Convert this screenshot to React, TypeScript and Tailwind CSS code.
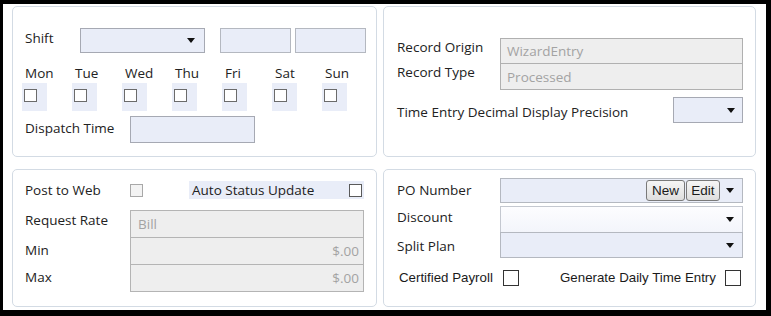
import React from 'react';

const Arrow: React.FC = () => (
  <svg width="8" height="5" viewBox="0 0 8 5" className="shrink-0">
    <path d="M0 0h8L4 5z" fill="#111" />
  </svg>
);

const Check: React.FC<{ size?: string; tone?: 'dark' | 'muted' }> = ({ size = 'w-[13px] h-[13px]', tone = 'dark' }) => (
  <div
    className={
      size +
      ' shrink-0 border ' +
      (tone === 'dark' ? 'border-[#4d4d4d] bg-white' : 'border-[#a8a8a8] bg-[#f3f3f3]')
    }
  />
);

const days = ['Mon', 'Tue', 'Wed', 'Thu', 'Fri', 'Sat', 'Sun'];

const Card: React.FC<{ className?: string; children: React.ReactNode }> = ({ className = '', children }) => (
  <div className={'border border-[#d3dbe4] rounded-[5px] bg-white flex flex-col ' + className}>{children}</div>
);

export default function App() {
  return (
    <div className="w-[771px] h-[316px] bg-black pt-[4px] pl-[3px] pr-[5px] pb-[6px] font-['Open_Sans',sans-serif] text-[13.5px] leading-[16px] text-[#222]">
      <div className="h-full bg-white pl-[9px] pt-[2px] grid grid-cols-[365px_373px] grid-rows-[151px_138px] gap-x-[6px] gap-y-[12px]">
        {/* Shift / days */}
        <Card className="pt-[21px]">
          <div className="flex items-center pl-[12px]">
            <div className="w-[55px] -mt-[6px]">Shift</div>
            <div className="w-[125px] h-[25px] border border-[#a6a9b3] bg-[#e9edf8] flex items-center justify-end pr-[9px]">
              <Arrow />
            </div>
            <div className="ml-[15px] w-[71px] h-[25px] border border-[#b4b8c0] bg-[#e9edf8]" />
            <div className="ml-[4px] w-[71px] h-[25px] border border-[#b4b8c0] bg-[#e9edf8]" />
          </div>
          <div className="mt-[12px] pl-[9px] grid grid-cols-[repeat(7,50px)]">
            {days.map((d) => (
              <div key={d} className="flex flex-col">
                <div className="pl-[3px] h-[16px]">{d}</div>
                <div className="mt-[2px] w-[25px] h-[28px] bg-[#e9edf8] pl-[2px] pt-[6px]">
                  <Check tone="dark" size="w-[13px] h-[13px] !border-[#6b6b6b]" />
                </div>
              </div>
            ))}
          </div>
          <div className="mt-[5px] flex items-center pl-[12px]">
            <div className="w-[105px] -mt-[3px]">Dispatch Time</div>
            <div className="w-[125px] h-[27px] border border-[#a6a9b3] bg-[#e9edf8]" />
          </div>
        </Card>

        {/* Record origin */}
        <Card className="pt-[31px] pl-[13px]">
          <div className="flex items-start">
            <div className="w-[103px] pt-[1px]">Record Origin</div>
            <div className="w-[243px] h-[26px] border border-[#b0b0b0] bg-[#eeeeee] text-[#a3a3a3] pl-[6px] flex items-center">WizardEntry</div>
          </div>
          <div className="flex items-start -mt-[1px]">
            <div className="w-[103px] pt-[1px]">Record Type</div>
            <div className="w-[243px] h-[27px] border border-[#b0b0b0] bg-[#eeeeee] text-[#a3a3a3] pl-[6px] flex items-center">Processed</div>
          </div>
          <div className="flex items-start mt-[7px]">
            <div className="w-[276px] pt-[7px]">Time Entry Decimal Display Precision</div>
            <div className="w-[70px] h-[26px] border border-[#a6a9b3] bg-[#e9edf8] flex items-center justify-end pr-[7px]">
              <Arrow />
            </div>
          </div>
        </Card>

        {/* Post to web / rates */}
        <Card className="pt-[11px] pl-[12px]">
          <div className="flex items-center h-[18px]">
            <div className="w-[105px]">Post to Web</div>
            <Check tone="muted" />
            <div className="ml-[46px] w-[175px] h-[18px] bg-[#e9edf8] flex items-center justify-between pl-[3px] pr-[2px]">
              <span>Auto Status Update</span>
              <Check tone="dark" size="w-[13px] h-[13px] !border-[#5a5a5a]" />
            </div>
          </div>
          <div className="mt-[11px] flex items-start">
            <div className="w-[105px] pt-[2px]">Request Rate</div>
            <div className="w-[234px] h-[28px] border border-[#b4b4b4] bg-[#eeeeee] text-[#a3a3a3] pl-[7px] flex items-center">Bill</div>
          </div>
          <div className="-mt-px flex items-start">
            <div className="w-[105px] pt-[5px]">Min</div>
            <div className="w-[234px] h-[28px] border border-[#b4b4b4] bg-[#eeeeee] text-[#a3a3a3] pr-[4px] flex items-center justify-end">$.00</div>
          </div>
          <div className="-mt-px flex items-start">
            <div className="w-[105px] pt-[5px]">Max</div>
            <div className="w-[234px] h-[28px] border border-[#b4b4b4] bg-[#eeeeee] text-[#a3a3a3] pr-[4px] flex items-center justify-end">$.00</div>
          </div>
        </Card>

        {/* PO number */}
        <Card className="pt-[8px] pl-[13px]">
          <div className="flex items-start">
            <div className="w-[103px] pt-[4px]">PO Number</div>
            <div className="w-[243px] h-[25px] border border-[#b4b8c0] bg-[#e9edf8] flex items-center justify-end pr-[8px] font-['Liberation_Sans',sans-serif] text-[13.5px]">
              <button className="w-[39px] h-[21px] border border-[#7a7a7a] rounded-[3px] bg-gradient-to-b from-[#f6f6f6] to-[#dedede] text-[#1a1a1a] leading-[19px]">New</button>
              <button className="ml-[1px] w-[34px] h-[21px] border border-[#7a7a7a] rounded-[3px] bg-gradient-to-b from-[#f6f6f6] to-[#dedede] text-[#1a1a1a] leading-[19px]">Edit</button>
              <div className="ml-[6px]"><Arrow /></div>
            </div>
          </div>
          <div className="mt-[3px] flex items-start">
            <div className="w-[103px] pt-[3px]">Discount</div>
            <div className="w-[243px] h-[27px] border border-[#c4c8d0] bg-gradient-to-b from-[#fdfdff] to-[#f3f5fb] flex items-center justify-end pr-[8px]">
              <Arrow />
            </div>
          </div>
          <div className="-mt-px flex items-start">
            <div className="w-[103px] pt-[6px]">Split Plan</div>
            <div className="w-[243px] h-[26px] border border-[#b4b8c0] bg-[#e9edf8] flex items-center justify-end pr-[8px]">
              <Arrow />
            </div>
          </div>
          <div className="mt-[12px] flex items-center font-['Liberation_Sans',sans-serif] text-[13.3px] text-[#1a1a1a]">
            <span className="ml-[2px] w-[104px]">Certified Payroll</span>
            <Check tone="dark" size="w-[16px] h-[16px] !border-[#333]" />
            <span className="ml-[41px]">Generate Daily Time Entry</span>
            <div className="ml-[9px]"><Check tone="dark" size="w-[16px] h-[16px] !border-[#333]" /></div>
          </div>
        </Card>
      </div>
    </div>
  );
}
